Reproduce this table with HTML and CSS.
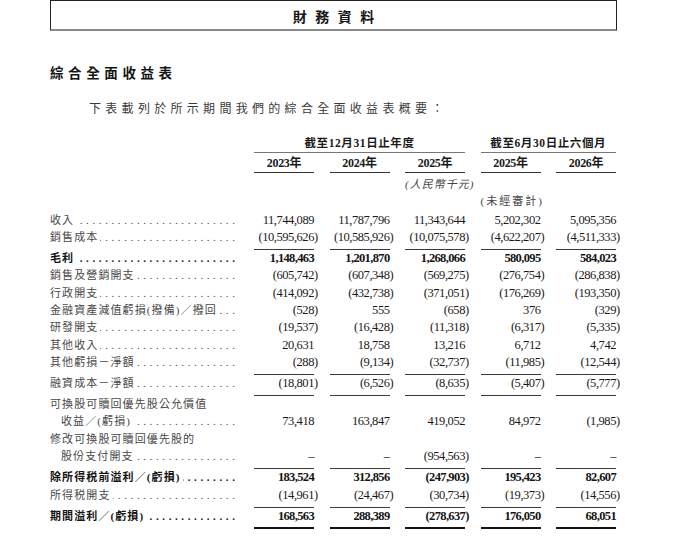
FILE: index.html
```html
<!DOCTYPE html>
<html lang="zh-Hant">
<head>
<meta charset="utf-8">
<title>財務資料</title>
<link rel="stylesheet" href="styles.css">
</head>
<body>
<div class="page">
  <div class="banner"><span>財務資料</span></div>
  <h2 class="heading">綜合全面收益表</h2>
  <p class="intro">下表載列於所示期間我們的綜合全面收益表概要：</p>

  <div class="tbl">
    <div></div>
    <div class="grp g1">截至12月31日止年度</div>
    <div class="grp g2">截至6月30日止六個月</div>

    <div></div>
    <div class="yr">2023年</div>
    <div class="yr">2024年</div>
    <div class="yr">2025年</div>
    <div class="yr">2025年</div>
    <div class="yr">2026年</div>

    <div></div><div></div><div></div>
    <div class="unit"><span class="ng">(人民幣千元)</span></div>
    <div></div><div></div>

    <div></div><div></div><div></div><div></div>
    <div class="unaud">(未經審計)</div>
    <div></div>

    <div class="row">
      <div class="lb"><span>收入</span><span class="ld"></span></div>
      <div class="n">11,744,089</div><div class="n">11,787,796</div><div class="n">11,343,644</div><div class="n">5,202,302</div><div class="n">5,095,356</div>
    </div>
    <div class="row r">
      <div class="lb"><span>銷售成本</span><span class="ld"></span></div>
      <div class="n"><span class="ng">(10,595,626)</span></div><div class="n"><span class="ng">(10,585,926)</span></div><div class="n"><span class="ng">(10,075,578)</span></div><div class="n"><span class="ng">(4,622,207)</span></div><div class="n"><span class="ng">(4,511,333)</span></div>
    </div>
    <div class="row b">
      <div class="lb"><span>毛利</span><span class="ld"></span></div>
      <div class="n">1,148,463</div><div class="n">1,201,870</div><div class="n">1,268,066</div><div class="n">580,095</div><div class="n">584,023</div>
    </div>
    <div class="row">
      <div class="lb"><span>銷售及營銷開支</span><span class="ld"></span></div>
      <div class="n"><span class="ng">(605,742)</span></div><div class="n"><span class="ng">(607,348)</span></div><div class="n"><span class="ng">(569,275)</span></div><div class="n"><span class="ng">(276,754)</span></div><div class="n"><span class="ng">(286,838)</span></div>
    </div>
    <div class="row">
      <div class="lb"><span>行政開支</span><span class="ld"></span></div>
      <div class="n"><span class="ng">(414,092)</span></div><div class="n"><span class="ng">(432,738)</span></div><div class="n"><span class="ng">(371,051)</span></div><div class="n"><span class="ng">(176,269)</span></div><div class="n"><span class="ng">(193,350)</span></div>
    </div>
    <div class="row">
      <div class="lb"><span>金融資產減值虧損(撥備)／撥回</span><span class="ld"></span></div>
      <div class="n"><span class="ng">(528)</span></div><div class="n">555</div><div class="n"><span class="ng">(658)</span></div><div class="n">376</div><div class="n"><span class="ng">(329)</span></div>
    </div>
    <div class="row">
      <div class="lb"><span>研發開支</span><span class="ld"></span></div>
      <div class="n"><span class="ng">(19,537)</span></div><div class="n"><span class="ng">(16,428)</span></div><div class="n"><span class="ng">(11,318)</span></div><div class="n"><span class="ng">(6,317)</span></div><div class="n"><span class="ng">(5,335)</span></div>
    </div>
    <div class="row">
      <div class="lb"><span>其他收入</span><span class="ld"></span></div>
      <div class="n">20,631</div><div class="n">18,758</div><div class="n">13,216</div><div class="n">6,712</div><div class="n">4,742</div>
    </div>
    <div class="row r">
      <div class="lb"><span>其他虧損－淨額</span><span class="ld"></span></div>
      <div class="n"><span class="ng">(288)</span></div><div class="n"><span class="ng">(9,134)</span></div><div class="n"><span class="ng">(32,737)</span></div><div class="n"><span class="ng">(11,985)</span></div><div class="n"><span class="ng">(12,544)</span></div>
    </div>
    <div class="row r">
      <div class="lb"><span>融資成本－淨額</span><span class="ld"></span></div>
      <div class="n"><span class="ng">(18,801)</span></div><div class="n"><span class="ng">(6,526)</span></div><div class="n"><span class="ng">(8,635)</span></div><div class="n"><span class="ng">(5,407)</span></div><div class="n"><span class="ng">(5,777)</span></div>
    </div>
    <div class="row">
      <div class="lb"><span>可換股可贖回優先股公允價值</span></div>
      <div></div><div></div><div></div><div></div><div></div>
    </div>
    <div class="row">
      <div class="lb ind"><span>收益／(虧損)</span><span class="ld"></span></div>
      <div class="n">73,418</div><div class="n">163,847</div><div class="n">419,052</div><div class="n">84,972</div><div class="n"><span class="ng">(1,985)</span></div>
    </div>
    <div class="row">
      <div class="lb"><span>修改可換股可贖回優先股的</span></div>
      <div></div><div></div><div></div><div></div><div></div>
    </div>
    <div class="row r">
      <div class="lb ind"><span>股份支付開支</span><span class="ld"></span></div>
      <div class="n">–</div><div class="n">–</div><div class="n"><span class="ng">(954,563)</span></div><div class="n">–</div><div class="n">–</div>
    </div>
    <div class="row b">
      <div class="lb"><span>除所得税前溢利／(虧損)</span><span class="ld"></span></div>
      <div class="n">183,524</div><div class="n">312,856</div><div class="n"><span class="ng">(247,903)</span></div><div class="n">195,423</div><div class="n">82,607</div>
    </div>
    <div class="row r">
      <div class="lb"><span>所得税開支</span><span class="ld"></span></div>
      <div class="n"><span class="ng">(14,961)</span></div><div class="n"><span class="ng">(24,467)</span></div><div class="n"><span class="ng">(30,734)</span></div><div class="n"><span class="ng">(19,373)</span></div><div class="n"><span class="ng">(14,556)</span></div>
    </div>
    <div class="row b d">
      <div class="lb"><span>期間溢利／(虧損)</span><span class="ld"></span></div>
      <div class="n">168,563</div><div class="n">288,389</div><div class="n"><span class="ng">(278,637)</span></div><div class="n">176,050</div><div class="n">68,051</div>
    </div>
  </div>
</div>
</body>
</html>
```

FILE: styles.css
```css
* {
  box-sizing: border-box;
  margin: 0;
  padding: 0;
}

html, body {
  background: #ffffff;
}

body {
  font-family: "Liberation Serif", "Noto Sans CJK TC", serif;
  color: #222222;
}

.page {
  width: 678px;
  padding-left: 50px;
}

.banner {
  width: 567px;
  height: 31px;
  border: 1px solid #222222;
  border-bottom: 2px solid #8a8a8a;
  display: flex;
  align-items: center;
  justify-content: center;
}

.banner span {
  font-family: "Noto Sans CJK TC", sans-serif;
  font-weight: 700;
  font-size: 14px;
  line-height: 1;
  letter-spacing: 8.5px;
  padding-left: 8.5px;
  padding-top: 1px;
  color: #151515;
}

.heading {
  margin-top: 32px;
  font-family: "Noto Sans CJK TC", sans-serif;
  font-weight: 700;
  font-size: 13.5px;
  line-height: 18px;
  letter-spacing: 4.6px;
  color: #151515;
}

.intro {
  margin-top: 19px;
  padding-left: 39px;
  font-family: "Noto Sans CJK TC", sans-serif;
  font-size: 12px;
  line-height: 16px;
  letter-spacing: 4.3px;
  color: #3a3a3a;
}

.tbl {
  margin-top: 19px;
  display: grid;
  grid-template-columns: 188.5px repeat(5, 60px);
  column-gap: 15.5px;
  align-items: start;
}

.row {
  display: contents;
}

/* header */
.grp {
  text-align: center;
  font-weight: 700;
  font-size: 11.5px;
  letter-spacing: 0.6px;
  line-height: 16px;
  padding-bottom: 1px;
  border-bottom: 1.5px solid #777777;
  color: #1a1a1a;
}

.g1 {
  grid-column: span 3;
}

.g2 {
  grid-column: span 2;
}

.yr {
  text-align: center;
  font-weight: 700;
  font-size: 12px;
  letter-spacing: -0.3px;
  line-height: 16px;
  padding-top: 2px;
  padding-bottom: 1px;
  border-bottom: 1.5px solid #333333;
  color: #1a1a1a;
}

.unit {
  margin-top: 3px;
  text-align: right;
  font-style: italic;
  font-size: 11px;
  letter-spacing: 1px;
  line-height: 16px;
  color: #444444;
  white-space: nowrap;
}

.unaud {
  margin-top: 1px;
  padding-bottom: 2.5px;
  font-size: 11px;
  letter-spacing: 2px;
  line-height: 16px;
  color: #444444;
  white-space: nowrap;
}

/* body rows */
.lb {
  display: flex;
  font-family: "Liberation Serif", "Noto Sans CJK TC", sans-serif;
  font-size: 11px;
  letter-spacing: 1.1px;
  line-height: 17.4px;
  color: #484848;
  white-space: nowrap;
}

.lb > span:first-child {
  flex: none;
}

.lb.ind {
  padding-left: 11px;
}

.ld {
  flex: 1;
  min-width: 0;
  overflow: hidden;
  direction: rtl;
  margin-left: 2px;
  margin-right: 0;
  letter-spacing: 0;
}

.ld::after {
  content: "............................................................";
  letter-spacing: 3.6px;
}

.n {
  text-align: right;
  font-size: 12.5px;
  letter-spacing: -0.45px;
  line-height: 17.4px;
  color: #1a1a1a;
  white-space: nowrap;
}

.ng {
  margin-right: -3.7px;
}

.row.r > .n {
  padding-bottom: 2.5px;
  border-bottom: 1.5px solid #3a3a3a;
}

.row.b > .lb,
.row.b > .n {
  font-weight: 700;
  color: #141414;
}

.row.b > .n {
  letter-spacing: -0.65px;
}

.row.d > .n {
  padding-bottom: 2px;
  border-bottom: 2px solid #141414;
  box-shadow: 0 2px 0 #ffffff, 0 4px 0 #141414;
}
```
